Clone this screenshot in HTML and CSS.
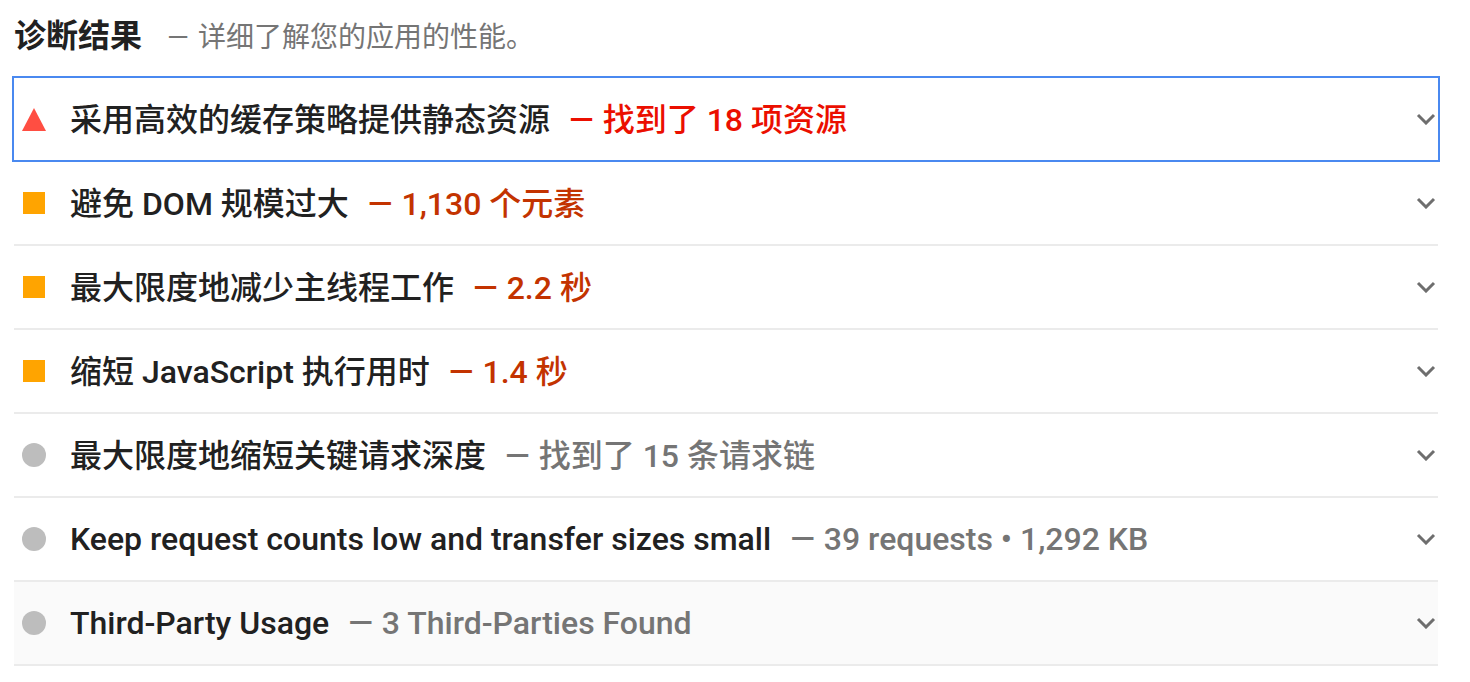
FILE: index.html
```html
<!DOCTYPE html>
<html lang="zh-CN">
<head>
<meta charset="utf-8">
<title>诊断结果</title>
<link rel="stylesheet" href="styles.css">
</head>
<body>
<section class="group">
  <header class="group-header">
    <span class="group-title">诊断结果</span>
    <span class="group-desc"><span class="dash">—</span>详细了解您的应用的性能。</span>
  </header>
  <div class="audits">
    <div class="audit">
      <div class="summary focused">
        <span class="icon"><span class="shape tri"></span></span>
        <span class="title">采用高效的缓存策略提供静态资源</span>
        <span class="display fail"><span class="dash">—</span>找到了 18 项资源</span>
        <svg class="chevron" viewBox="0 0 20 12" width="20" height="12"><polyline points="2,2 10,10 18,2"/></svg>
      </div>
    </div>
    <div class="audit">
      <div class="summary">
        <span class="icon"><span class="shape square"></span></span>
        <span class="title">避免 DOM 规模过大</span>
        <span class="display average"><span class="dash">—</span>1,130 个元素</span>
        <svg class="chevron" viewBox="0 0 20 12" width="20" height="12"><polyline points="2,2 10,10 18,2"/></svg>
      </div>
    </div>
    <div class="audit">
      <div class="summary">
        <span class="icon"><span class="shape square"></span></span>
        <span class="title">最大限度地减少主线程工作</span>
        <span class="display average"><span class="dash">—</span>2.2 秒</span>
        <svg class="chevron" viewBox="0 0 20 12" width="20" height="12"><polyline points="2,2 10,10 18,2"/></svg>
      </div>
    </div>
    <div class="audit">
      <div class="summary">
        <span class="icon"><span class="shape square"></span></span>
        <span class="title">缩短 JavaScript 执行用时</span>
        <span class="display average"><span class="dash">—</span>1.4 秒</span>
        <svg class="chevron" viewBox="0 0 20 12" width="20" height="12"><polyline points="2,2 10,10 18,2"/></svg>
      </div>
    </div>
    <div class="audit">
      <div class="summary">
        <span class="icon"><span class="shape circle"></span></span>
        <span class="title">最大限度地缩短关键请求深度</span>
        <span class="display info"><span class="dash">—</span>找到了 15 条请求链</span>
        <svg class="chevron" viewBox="0 0 20 12" width="20" height="12"><polyline points="2,2 10,10 18,2"/></svg>
      </div>
    </div>
    <div class="audit">
      <div class="summary latin">
        <span class="icon"><span class="shape circle"></span></span>
        <span class="title">Keep request counts low and transfer sizes small</span>
        <span class="display info"><span class="dash">—</span>39 requests • 1,292 KB</span>
        <svg class="chevron" viewBox="0 0 20 12" width="20" height="12"><polyline points="2,2 10,10 18,2"/></svg>
      </div>
    </div>
    <div class="audit">
      <div class="summary latin hovered">
        <span class="icon"><span class="shape circle"></span></span>
        <span class="title">Third-Party Usage</span>
        <span class="display info"><span class="dash">—</span>3 Third-Parties Found</span>
        <svg class="chevron" viewBox="0 0 20 12" width="20" height="12"><polyline points="2,2 10,10 18,2"/></svg>
      </div>
    </div>
  </div>
</section>
</body>
</html>
```

FILE: styles.css
```css
html, body {
  margin: 0;
  padding: 0;
  background: #ffffff;
}

body {
  font-family: Roboto, "Noto Sans CJK SC", "Noto Sans", sans-serif;
  color: #212121;
}

.group {
  width: 1424px;
  margin-left: 14px;
}

.group-header {
  display: flex;
  align-items: baseline;
  padding: 16px 0 22px;
  height: 40px;
}

.group-title {
  font-size: 32px;
  font-weight: 700;
  line-height: 40px;
  color: #212121;
}

.group-desc {
  font-size: 28px;
  line-height: 40px;
  color: #757575;
  margin-left: 25px;
}

.group-desc .dash {
  font-size: 28px;
  margin-right: 9px;
}

.audit {
  border-bottom: 2px solid #ebebeb;
}

.summary {
  display: flex;
  align-items: center;
  height: 82px;
  padding-left: 8px;
  font-size: 32px;
  font-weight: 500;
}

.summary.focused {
  outline: 2px solid #4a89f0;
  outline-offset: 0;
  position: relative;
}

.summary.hovered {
  background: #fafafa;
}

.icon {
  width: 24px;
  height: 24px;
  display: flex;
  align-items: center;
  justify-content: center;
  margin-right: 24px;
  flex: none;
}

.shape.tri {
  width: 0;
  height: 0;
  border-left: 12px solid transparent;
  border-right: 12px solid transparent;
  border-bottom: 23px solid #ff4e42;
}

.shape.square {
  width: 22px;
  height: 22px;
  background: #ffa400;
}

.shape.circle {
  width: 24px;
  height: 24px;
  border-radius: 50%;
  background: #bdbdbd;
}

.title {
  color: #212121;
  white-space: nowrap;
  margin-bottom: 4px;
}

.display {
  margin-left: 19px;
  margin-bottom: 4px;
  white-space: nowrap;
}

.summary.latin .title,
.summary.latin .display {
  margin-bottom: 0;
}

.display .dash {
  margin-right: 9px;
}

.display.fail {
  color: #eb0f00;
}

.display.average {
  color: #c33300;
}

.display.info {
  color: #757575;
}

.chevron {
  margin-left: auto;
  margin-right: 2px;
  fill: none;
  stroke: #6e6e6e;
  stroke-width: 3;
  flex: none;
}
```
